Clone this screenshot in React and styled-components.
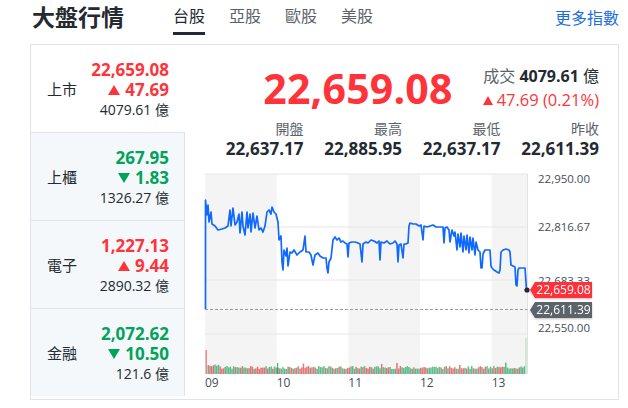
import React from 'react'
import styled, { createGlobalStyle } from 'styled-components'

const RED = '#ff333a'
const GREEN = '#00a35a'
const CJK = `"Open Sans", "Noto Sans CJK TC", sans-serif`

const GlobalStyle = createGlobalStyle`
  body {
    margin: 0;
    background: #fff;
    font-family: ${CJK};
    color: #232a31;
  }
`

const Page = styled.div`
  width: 589px;
  padding: 0 10px 0 30px;
`

const Header = styled.header`
  display: flex;
  align-items: center;
  height: 44px;
`

const Title = styled.h1`
  margin: -10px 0 0 2px;
  font-size: 23px;
  font-weight: 700;
  line-height: 32px;
`

const Tabs = styled.nav`
  display: flex;
  gap: 24px;
  margin-left: 49px;
  align-self: stretch;
`

const Tab = styled.span`
  position: relative;
  font-size: 16px;
  line-height: 32px;
  color: ${p => (p.$active ? '#232a31' : '#5b636a')};

  &::after {
    content: '';
    display: ${p => (p.$active ? 'block' : 'none')};
    position: absolute;
    left: 0;
    right: 0;
    bottom: 9px;
    height: 3px;
    background: #232a31;
  }
`

const MoreLink = styled.a`
  margin-left: auto;
  margin-top: -10px;
  font-size: 16px;
  color: #1d6fdc;
  text-decoration: none;
`

const Panel = styled.section`
  display: grid;
  grid-template-columns: 154px 1fr;
  height: 354px;
  border: 1px solid #e0e4e9;
`

const SideList = styled.div`
  display: flex;
  flex-direction: column;
`

const SideRow = styled.div`
  display: flex;
  align-items: center;
  justify-content: space-between;
  box-sizing: border-box;
  height: ${p => (p.$first ? '87px' : '88px')};
  padding: 0 15px 0 16px;
  background: ${p => (p.$active ? '#fff' : '#f5f8fa')};
  border-top: ${p => (p.$first ? 'none' : '1px solid #e0e4e9')};
  border-right: ${p => (p.$active ? '1px solid transparent' : '1px solid #e0e4e9')};
`

const SideName = styled.span`
  font-size: 15px;
  color: #232a31;
`

const SideValues = styled.div`
  display: flex;
  flex-direction: column;
  align-items: flex-end;
  gap: 1px;
  padding-top: 1px;
`

const Price = styled.div`
  font-size: 17px;
  font-weight: 700;
  line-height: 19px;
  color: ${p => p.$color};
`

const Volume = styled.div`
  font-size: 14px;
  line-height: 19px;
  color: #232a31;
`

const Arrow = styled.span`
  display: inline-block;
  width: 0;
  height: 0;
  margin-right: 5px;
  vertical-align: 1px;
  border-left: 6px solid transparent;
  border-right: 6px solid transparent;
  ${p =>
    p.$up
      ? `border-bottom: 10px solid ${RED};`
      : `border-top: 10px solid ${GREEN};`}
`

const SmallArrow = styled(Arrow)`
  margin-right: 4px;
  border-left-width: 5.5px;
  border-right-width: 5.5px;
  border-bottom-width: 9px;
`

const Main = styled.div`
  display: flex;
  flex-direction: column;
`

const QuoteHead = styled.div`
  display: flex;
  align-items: center;
  justify-content: flex-end;
  height: 75px;
  padding: 10px 19px 0 0;
  box-sizing: border-box;
`

const BigPrice = styled.div`
  font-size: 41px;
  font-weight: 700;
  color: ${RED};
  line-height: 50px;
  letter-spacing: 0.2px;
`

const QuoteMeta = styled.div`
  margin-left: 30px;
  text-align: right;
  font-size: 16px;
  line-height: 23px;
`

const Muted = styled.span`
  color: #5b636a;
`

const Strong = styled.b`
  font-weight: 700;
`

const Change = styled.div`
  color: ${RED};
  font-size: 16.5px;
`

const Stats = styled.div`
  display: grid;
  grid-template-columns: repeat(4, 98.5px);
  justify-content: end;
  padding-right: 19px;
  height: 45px;
`

const Stat = styled.div`
  text-align: right;
`

const StatLabel = styled.div`
  font-size: 14px;
  color: #5b636a;
  line-height: 18px;
`

const StatValue = styled.div`
  font-size: 17px;
  font-weight: 700;
  line-height: 22px;
`

const ChartSvg = styled.svg`
  display: block;
  font-family: "Open Sans", sans-serif;
`

const sides = [
  { name: '上市', price: '22,659.08', change: '47.69', vol: '4079.61', up: true, active: true },
  { name: '上櫃', price: '267.95', change: '1.83', vol: '1326.27', up: false },
  { name: '電子', price: '1,227.13', change: '9.44', vol: '2890.32', up: true },
  { name: '金融', price: '2,072.62', change: '10.50', vol: '121.6', up: false },
]

const stats = [
  ['開盤', '22,637.17'],
  ['最高', '22,885.95'],
  ['最低', '22,637.17'],
  ['昨收', '22,611.39'],
]

const line = [
  [205.5, 309], [205.5, 200], [207, 215], [208, 205], [209, 222], [211, 212], [212, 224], [215, 226],
  [218, 230], [222, 229], [225, 228], [228, 226], [230, 210], [231, 226], [233, 208], [235, 225],
  [237, 222], [239, 214], [240, 233], [242, 212], [243, 226], [245, 235], [247, 212], [248, 228],
  [250, 214], [251, 232], [253, 213], [255, 228], [257, 216], [259, 230], [261, 228], [263, 232],
  [265, 226], [267, 212], [269, 210], [271, 214], [272, 207], [274, 212], [276, 214], [278, 222],
  [279, 240], [281, 236], [282, 262], [283, 270], [284, 250], [286, 256], [287, 248], [288, 266],
  [290, 252], [292, 253], [294, 250], [297, 255], [300, 252], [303, 250], [305, 236], [306, 252],
  [309, 252], [311, 255], [313, 265], [315, 255], [318, 253], [320, 256], [323, 258], [326, 258],
  [327, 268], [328, 273], [329, 262], [331, 258], [333, 240], [335, 237], [337, 240], [339, 238],
  [341, 242], [343, 241], [345, 243], [347, 244], [348, 257], [349, 243], [352, 242], [355, 242],
  [358, 243], [360, 244], [362, 262], [363, 244], [366, 242], [368, 243], [371, 240], [374, 241],
  [377, 243], [379, 241], [380, 260], [381, 242], [384, 243], [387, 241], [390, 244], [393, 243],
  [395, 241], [397, 244], [398, 262], [399, 245], [401, 244], [403, 258], [404, 244], [406, 244],
  [408, 243], [409, 226], [410, 223], [413, 224], [416, 224], [419, 226], [421, 225], [423, 240],
  [424, 226], [427, 227], [430, 226], [433, 225], [436, 227], [440, 227], [443, 227], [444, 243],
  [445, 228], [447, 227], [449, 230], [450, 242], [452, 230], [454, 236], [455, 232], [457, 250],
  [458, 234], [460, 247], [461, 233], [463, 252], [464, 236], [466, 250], [467, 235], [469, 253],
  [470, 237], [472, 250], [473, 238], [475, 255], [476, 242], [478, 250], [480, 252], [481, 268],
  [482, 268], [483, 254], [485, 250], [487, 250], [490, 250], [491, 266], [492, 268], [494, 270],
  [497, 272], [499, 273], [500, 270], [501, 252], [503, 250], [506, 249], [509, 250], [510, 252],
  [511, 265], [513, 266], [515, 267], [516, 285], [517, 286], [518, 270], [519, 268], [521, 268],
  [523, 268], [525, 268], [526.5, 290],
]

// deterministic noise for volume bars
let seed = 7
const rand = () => {
  seed = (seed * 9301 + 49297) % 233280
  return seed / 233280
}

const bars = []
for (let x = 207.5; x < 524; x += 1.7) {
  const early = x < 220 ? 2.5 : 0
  const h = 5 + rand() * 3 + early + (rand() > 0.96 ? 4 : 0)
  bars.push({ x, h, up: rand() > 0.5 })
}

const hours = [
  { label: '09', x: 205 },
  { label: '10', x: 276.7 },
  { label: '11', x: 348.3 },
  { label: '12', x: 420 },
  { label: '13', x: 491.7 },
]

const yTicks = [
  { v: '22,950.00', line: 174, text: 179 },
  { v: '22,816.67', line: 227, text: 227 },
  { v: '22,683.33', line: 280, text: 281 },
  { v: '22,550.00', line: 334, text: 328 },
]

const PriceTag = ({ y, color, text }) => (
  <g filter="url(#tagShadow)">
    <path
      d={`M530 ${y} L535 ${y - 8} L592 ${y - 8} L592 ${y + 8} L535 ${y + 8} Z`}
      fill={color}
    />
    <text x="563.5" y={y + 4.2} fontSize="12" fill="#fff" textAnchor="middle">
      {text}
    </text>
  </g>
)

const Chart = () => (
  <ChartSvg width="432" height="233" viewBox="185 165 432 233">
    <defs>
      <filter id="tagShadow" x="-10%" y="-30%" width="120%" height="160%">
        <feDropShadow dx="0" dy="1" stdDeviation="0.8" floodOpacity="0.25" />
      </filter>
    </defs>
    {/* alternating hour bands */}
    <rect x="205" y="174" width="71.7" height="200" fill="#f4f4f4" />
    <rect x="348.3" y="174" width="71.7" height="200" fill="#f4f4f4" />
    <rect x="491.7" y="174" width="35.8" height="200" fill="#f4f4f4" />
    {yTicks.map(t => (
      <line key={t.v} x1="205" x2="527.5" y1={t.line} y2={t.line} stroke="#e6e6e6" strokeWidth="1" />
    ))}
    <line x1="527.5" x2="527.5" y1="174" y2="374" stroke="#e2e2e2" />
    <line x1="205" x2="527.5" y1="309.5" y2="309.5" stroke="#9a9a9a" strokeDasharray="3 2" />
    {bars.map((b, i) => (
      <rect
        key={i}
        x={b.x}
        y={374 - b.h}
        width="1.5"
        height={b.h}
        fill={b.up ? '#d9484e' : '#2fa566'}
        opacity="0.75"
      />
    ))}
    <rect x="205.5" y="350" width="1.4" height="24" fill="#e8545a" opacity="0.75" />
    <rect x="277" y="363" width="1.2" height="11" fill="#1e9e5a" opacity="0.8" />
    <rect x="525.5" y="338" width="1" height="36" fill="#8fd6ae" opacity="0.8" />
    <polyline
      points={line.map(p => p.join(',')).join(' ')}
      fill="none"
      stroke="#0f69ff"
      strokeWidth="1.7"
      strokeLinejoin="round"
    />
    <circle cx="527" cy="290" r="2.6" fill="#232a31" />
    {yTicks.map(t => (
      <text key={t.v} x="538" y={t.text + 4} fontSize="11.5" fill="#464e56">
        {t.v}
      </text>
    ))}
    <PriceTag y={290} color={RED} text="22,659.08" />
    <PriceTag y={310} color="#5b636a" text="22,611.39" />
    {hours.map(h => (
      <text key={h.label} x={h.x} y="387" fontSize="12" fill="#464e56">
        {h.label}
      </text>
    ))}
  </ChartSvg>
)

export default function App() {
  return (
    <Page>
      <GlobalStyle />
      <Header>
        <Title>大盤行情</Title>
        <Tabs>
          <Tab $active>台股</Tab>
          <Tab>亞股</Tab>
          <Tab>歐股</Tab>
          <Tab>美股</Tab>
        </Tabs>
        <MoreLink href="#">更多指數</MoreLink>
      </Header>
      <Panel>
        <SideList>
          {sides.map((s, i) => (
            <SideRow key={s.name} $first={i === 0} $active={s.active}>
              <SideName>{s.name}</SideName>
              <SideValues>
                <Price $color={s.up ? RED : GREEN}>{s.price}</Price>
                <Price $color={s.up ? RED : GREEN}>
                  <Arrow $up={s.up} />
                  {s.change}
                </Price>
                <Volume>{s.vol} 億</Volume>
              </SideValues>
            </SideRow>
          ))}
        </SideList>
        <Main>
          <QuoteHead>
            <BigPrice>22,659.08</BigPrice>
            <QuoteMeta>
              <div>
                <Muted>成交</Muted> <Strong>4079.61</Strong> 億
              </div>
              <Change>
                <SmallArrow $up />
                47.69 (0.21%)
              </Change>
            </QuoteMeta>
          </QuoteHead>
          <Stats>
            {stats.map(([label, value]) => (
              <Stat key={label}>
                <StatLabel>{label}</StatLabel>
                <StatValue>{value}</StatValue>
              </Stat>
            ))}
          </Stats>
          <Chart />
        </Main>
      </Panel>
    </Page>
  )
}
